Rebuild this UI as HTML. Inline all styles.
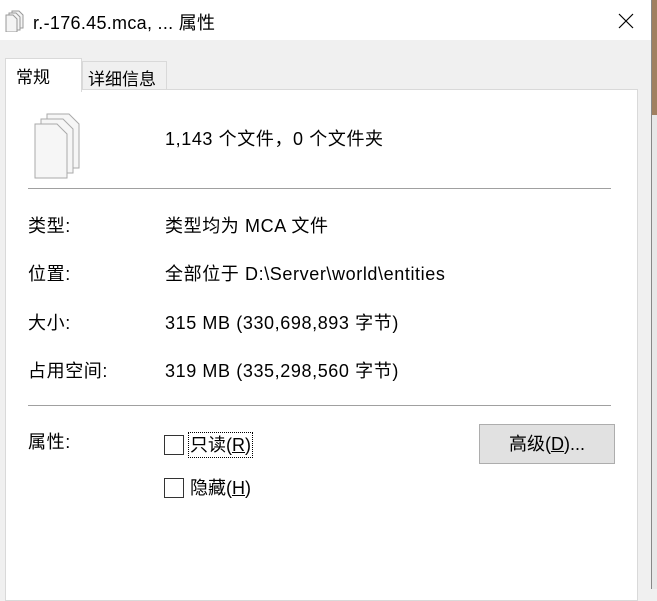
<!DOCTYPE html><html><head><meta charset="utf-8"><style>
body{margin:0;width:657px;height:589px;overflow:hidden;background:#f0f0f0;font-family:"Liberation Sans","Noto Sans CJK SC",sans-serif;font-size:18px;color:#000;position:relative;letter-spacing:0.6px}
.a{position:absolute;white-space:nowrap}
</style></head><body>
<div class="a" style="left:651px;top:0;width:6px;height:589px;background:#e8e8e8;border-left:1px solid #888"></div>
<div class="a" style="left:652px;top:0;width:5px;height:115px;background:#a08060"></div>
<div class="a" style="left:0;top:0;width:651px;height:40px;background:#fff"></div>
<svg class="a" style="left:5px;top:10px" width="20" height="22"><g fill="#f4f4f4" stroke="#999"><path d="M7 1h7l4 4v13H7z"/><path d="M4 3h7l4 4v13H4z"/><path d="M1 5h7l4 4v13H1z"/></g></svg>
<div class="a" style="left:33px;top:9px;font-size:18px;letter-spacing:0.3px">r.-176.45.mca, ... 属性</div>
<svg class="a" style="left:618px;top:13px" width="16" height="16"><path d="M1 1L15 15M15 1L1 15" stroke="#000" stroke-width="1.2"/></svg>
<div class="a" style="left:82px;top:61px;width:83px;height:28px;border:1px solid #d9d9d9;border-bottom:none;background:#f0f0f0"></div>
<div class="a" style="left:88px;top:65px;font-size:17px;letter-spacing:0">详细信息</div>
<div class="a" style="left:5px;top:89px;width:631px;height:510px;border:1px solid #d9d9d9;background:#fff"></div>
<div class="a" style="left:5px;top:58px;width:75px;height:33px;border:1px solid #d9d9d9;border-bottom:none;background:#fff"></div>
<div class="a" style="left:16px;top:63px;font-size:17px;letter-spacing:0">常规</div>
<svg class="a" style="left:33px;top:113px" width="50" height="67"><g fill="#f6f6f6" stroke="#aaa"><path d="M14 1h22l10 10v44H14z"/><path d="M8 6h22l10 10v44H8z"/><path d="M2 11h22l10 10v44H2z"/></g></svg>
<div class="a" style="left:165px;top:125px">1,143 个文件，0 个文件夹</div>
<div class="a" style="left:28px;top:188px;width:583px;height:1px;background:#a0a0a0"></div>
<div class="a" style="left:28px;top:212px">类型:</div><div class="a" style="left:165px;top:212px">类型均为 MCA 文件</div>
<div class="a" style="left:28px;top:260px">位置:</div><div class="a" style="left:165px;top:260px">全部位于 D:\Server\world\entities</div>
<div class="a" style="left:28px;top:309px">大小:</div><div class="a" style="left:165px;top:309px">315 MB (330,698,893 字节)</div>
<div class="a" style="left:28px;top:357px">占用空间:</div><div class="a" style="left:165px;top:357px">319 MB (335,298,560 字节)</div>
<div class="a" style="left:28px;top:405px;width:583px;height:1px;background:#a0a0a0"></div>
<div class="a" style="left:28px;top:428px">属性:</div>
<div class="a" style="left:164px;top:435px;width:18px;height:18px;border:1px solid #333;background:#fff"></div>
<div class="a" style="left:188px;top:432px;border:1px dotted #000;padding:0 1px;line-height:24px;letter-spacing:0">只读(<u>R</u>)</div>
<div class="a" style="left:164px;top:478px;width:18px;height:18px;border:1px solid #333;background:#fff"></div>
<div class="a" style="left:190px;top:476px;line-height:24px;letter-spacing:0">隐藏(<u>H</u>)</div>
<div class="a" style="left:479px;top:424px;width:134px;height:38px;border:1px solid #adadad;background:#e1e1e1;text-align:center;line-height:38px;letter-spacing:0">高级(<u>D</u>)...</div>
</body></html>
